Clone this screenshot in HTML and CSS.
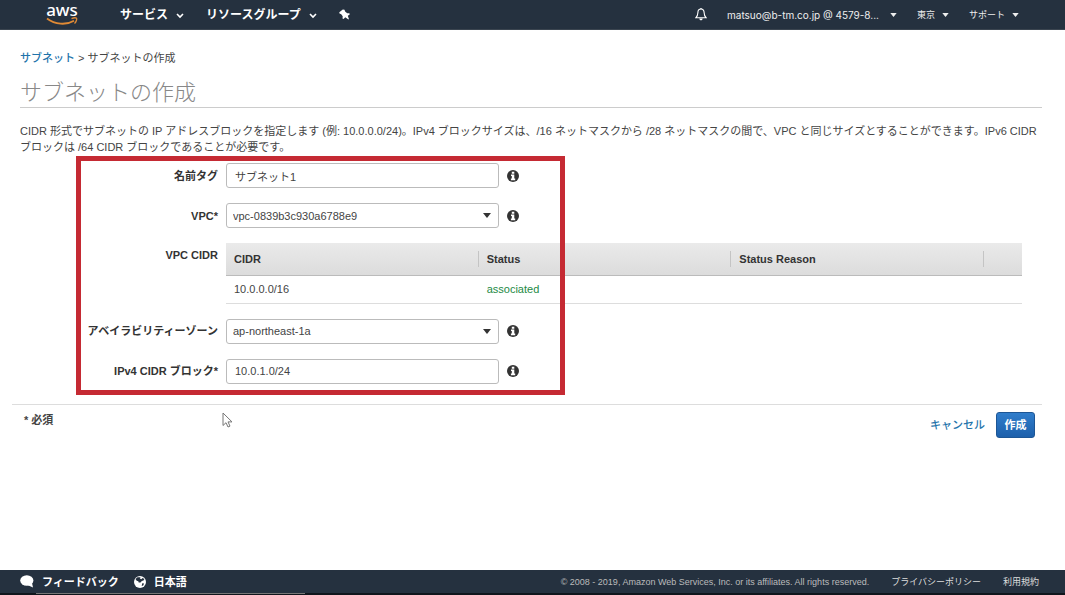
FILE: index.html
```html
<!DOCTYPE html>
<html lang="ja">
<head>
<meta charset="utf-8">
<meta name="viewport" content="width=device-width, initial-scale=1">
<title>サブネットの作成</title>
<link rel="stylesheet" href="styles.css">
</head>
<body>
<svg class="defs" aria-hidden="true">
  <symbol id="info" viewBox="0 0 12 12"><circle cx="6" cy="6" r="6" fill="#333"/><path d="M4.800 1.800h2.500v1.900H4.800zM4 4.500h3.300v4H8.200V10.200H3.900V8.600h.9V6.100H4z" fill="#fff"/></symbol>
  <symbol id="caret" viewBox="0 0 8 5"><path d="M0 0h8L4 5z" fill="currentColor"/></symbol>
  <symbol id="chevron" viewBox="0 0 8 6"><path d="M1 1l3 3 3-3" fill="none" stroke="currentColor" stroke-width="1.6"/></symbol>
</svg>

<header class="topbar">
  <a class="logo" href="#" aria-label="aws">
    <span class="logo-text">aws</span>
    <svg class="logo-smile" viewBox="0 0 32 9"><path d="M1 1.500c8 6 19 7 27 2.200" fill="none" stroke="#e08a35" stroke-width="1.800"/><path d="M25.500 1.700c2-.9 4.500-.9 5-.4s-.1 3.600-2 5.200" fill="none" stroke="#e08a35" stroke-width="1.300"/></svg>
  </a>
  <nav class="menus">
    <button class="menu" type="button">サービス<svg class="chevron"><use href="#chevron"/></svg></button>
    <button class="menu" type="button">リソースグループ<svg class="chevron"><use href="#chevron"/></svg></button>
    <button class="menu" type="button" aria-label="ピン留め"><svg class="pin" viewBox="0 0 11 11"><path d="M3.800.4L5.500.8l.6 1.800 2.100 1.600 2.200.1.300 1.100-1.900 1.300L9.900 10l-.5.500L6.300 8.300 4.500 9.900l-1-.4.2-2.300-1.500-2L.5 4.400.300 3.200z" fill="#fff"/></svg></button>
  </nav>
  <div class="account">
    <button class="icon-button" type="button" aria-label="通知"><svg class="bell" viewBox="0 0 12 13"><path d="M6 1C3.800 1 2.900 2.700 2.900 4.500c0 2.700-.8 4-2.100 5.300h10.400C9.900 8.500 9.100 7.200 9.100 4.500 9.100 2.700 8.200 1 6 1z" fill="none" stroke="#fff" stroke-width="1.100"/><path d="M4.300 10.500h3.400c0 2.400-3.400 2.400-3.400 0zM5.400 0h1.200v1.200H5.400z" fill="#fff"/></svg></button>
    <button class="account-item account-user" type="button">matsuo@b-tm.co.jp @ 4579-8...<svg class="small-caret"><use href="#caret"/></svg></button>
    <button class="account-item" type="button">東京<svg class="small-caret"><use href="#caret"/></svg></button>
    <button class="account-item" type="button">サポート<svg class="small-caret"><use href="#caret"/></svg></button>
  </div>
</header>

<main class="content">
  <nav class="breadcrumb"><a href="#">サブネット</a> &gt; サブネットの作成</nav>
  <h1 class="title">サブネットの作成</h1>
  <p class="intro">CIDR 形式でサブネットの IP アドレスブロックを指定します (例: 10.0.0.0/24)。IPv4 ブロックサイズは、/16 ネットマスクから /28 ネットマスクの間で、VPC と同じサイズとすることができます。IPv6 CIDR ブロックは /64 CIDR ブロックであることが必要です。</p>

  <form class="form">
    <div class="row">
      <label class="label" for="name">名前タグ</label>
      <input class="field" id="name" type="text" value="サブネット1">
      <svg class="info"><use href="#info"/></svg>
    </div>
    <div class="row">
      <label class="label" for="vpc">VPC*</label>
      <span class="select"><select class="field" id="vpc"><option>vpc-0839b3c930a6788e9</option></select><svg class="caret"><use href="#caret"/></svg></span>
      <svg class="info"><use href="#info"/></svg>
    </div>
    <div class="row row-table">
      <span class="label" id="cidr-label">VPC CIDR</span>
      <table class="table" aria-labelledby="cidr-label">
        <thead><tr><th><span>CIDR</span></th><th><span>Status</span></th><th><span>Status Reason</span></th><th class="rest"></th></tr></thead>
        <tbody><tr><td>10.0.0.0/16</td><td class="ok">associated</td><td></td><td></td></tr></tbody>
      </table>
    </div>
    <div class="row">
      <label class="label" for="zone">アベイラビリティーゾーン</label>
      <span class="select"><select class="field" id="zone"><option>ap-northeast-1a</option></select><svg class="caret"><use href="#caret"/></svg></span>
      <svg class="info"><use href="#info"/></svg>
    </div>
    <div class="row">
      <label class="label" for="block">IPv4 CIDR ブロック*</label>
      <input class="field" id="block" type="text" value="10.0.1.0/24">
      <svg class="info"><use href="#info"/></svg>
    </div>
    <div class="highlight"></div>
  </form>

  <div class="actions">
    <span class="required">* 必須</span>
    <a class="cancel" href="#">キャンセル</a>
    <button class="create" type="button">作成</button>
    <svg class="cursor" viewBox="0 0 11 16"><path d="M1 1v12.500l3-2.800 2 4.300 2-.9-2-4.200h4z" fill="#fff" stroke="#777"/></svg>
  </div>
</main>

<footer class="footer">
  <a class="footer-main" href="#"><svg class="bubble" viewBox="0 0 14 13"><ellipse cx="6.800" cy="5.500" rx="6.600" ry="5.200" fill="#fff"/><path d="M7.500 10l5.500 2.500-1-4.500z" fill="#fff"/></svg>フィードバック</a>
  <a class="footer-main" href="#"><svg class="globe" viewBox="0 0 12 12"><circle cx="6" cy="6" r="6" fill="#fff"/><path d="M1.500 3l2-1.700 2.500-.1.700.9-1 .5 1.500.6 1.400-1.300 1.800 1-.9 1.500-1.700.5-1.300 1.700-1.800-.2-.4-1.200-1.600-.4zM8.200 7.200l1.900.2-.9 2-1.500.6z" fill="#25313f"/></svg>日本語</a>
  <span class="copyright">© 2008 - 2019, Amazon Web Services, Inc. or its affiliates. All rights reserved.</span>
  <a class="footer-link" href="#">プライバシーポリシー</a>
  <a class="footer-link" href="#">利用規約</a>
</footer>
<div class="strip"><span class="strip-thumb"></span></div>
</body>
</html>
```

FILE: styles.css
```css
* { box-sizing: border-box; }

body {
  display: flex;
  flex-direction: column;
  min-height: 100vh;
  margin: 0;
  background: #fff;
  color: #444;
  font: 11px/16px "Liberation Sans", "Noto Sans CJK JP", sans-serif;
}

a { color: #1f74ab; text-decoration: none; }
button, input, select { margin: 0; font: inherit; }
svg { display: block; flex: none; }
.defs { position: absolute; width: 0; height: 0; }

.topbar {
  display: flex;
  align-items: center;
  height: 30px;
  padding: 0 46px;
  background: #25313f;
  border-bottom: 1px solid #3b4550;
  color: #fff;
}

.logo { width: 32px; color: #fff; }
.logo-text {
  display: block;
  font: 500 17px/14px "Noto Sans", sans-serif;
  text-align: center;
}
.logo-smile { width: 32px; height: 9px; }

.menus { display: flex; align-items: center; gap: 22px; margin-left: 42px; }
.menu, .account-item, .icon-button {
  display: flex;
  align-items: center;
  padding: 0;
  border: 0;
  background: none;
  color: #fff;
}
.menu { gap: 8px; font-size: 12px; font-weight: 700; }
.chevron { width: 8px; height: 6px; margin-top: 2px; }
.pin { width: 11px; height: 11px; }

.account { display: flex; align-items: center; gap: 20px; margin-left: auto; }
.account-item { gap: 7px; color: #eee; font: 9px/16px "Noto Sans CJK JP", sans-serif; }
.account-user { gap: 11px; font: 10px/16px Inter, sans-serif; }
.bell { width: 12px; height: 13px; }
.small-caret { width: 7px; height: 4px; }

.content { flex: 1; padding: 20px 23px 0 12px; }
.breadcrumb, .title, .intro { margin: 0 0 0 8px; }
.breadcrumb a { font-weight: 500; }
.title {
  margin-top: 13px;
  border-bottom: 1px solid #ccc;
  color: #888;
  font-size: 22px;
  font-weight: 300;
  line-height: 28px;
}
.intro { margin-top: 15px; }

.form { position: relative; display: grid; gap: 15px; padding: 8px 20px 20px 0; }
.row { display: grid; grid-template-columns: 206px 273px 12px; column-gap: 8px; align-items: center; }
.row-table { grid-template-columns: 206px 1fr; align-items: start; }
.row-table .label { padding-top: 4px; }
.label { color: #333; font-weight: 700; text-align: right; }
.field {
  width: 100%;
  height: 25px;
  padding: 0 8px;
  border: 1px solid #bbb;
  border-radius: 3px;
  background: #fff;
  color: #444;
}
.select { display: grid; align-items: center; }
.select > * { grid-area: 1 / 1; }
.select .field { padding: 0 6px; appearance: none; }
.caret { justify-self: end; width: 8px; height: 5px; margin-right: 8px; color: #333; pointer-events: none; }
.info { width: 12px; height: 12px; }

.table { width: 100%; border-collapse: collapse; table-layout: fixed; }
.table thead { background: linear-gradient(#eaeaea, #dcdcdc); }
.table th { height: 32px; padding: 0; border-bottom: 1px solid #bbb; color: #333; text-align: left; }
.table th span { display: block; padding-left: 8px; border-right: 1px solid #c4c4c4; }
.table .rest { width: 38px; }
.table td { height: 28px; padding: 0 8px; border-bottom: 1px solid #ddd; }
.table .ok { color: #238a45; }

.highlight {
  position: absolute;
  top: 1px;
  left: 64px;
  width: 489px;
  height: 239px;
  border: 5px solid #c52a33;
  pointer-events: none;
}

.actions {
  position: relative;
  display: flex;
  align-items: center;
  gap: 11px;
  padding: 7px 7px 0 12px;
  border-top: 1px solid #ddd;
}
.required { align-self: flex-start; margin-right: auto; font-weight: 700; }
.cancel { font-weight: 500; }
.create {
  width: 39px;
  height: 26px;
  padding: 0;
  border: 1px solid #1d5695;
  border-radius: 3px;
  background: linear-gradient(#307dcb, #1d60ab);
  color: #fff;
  font-weight: 700;
}
.cursor { position: absolute; top: 7px; left: 210px; width: 11px; height: 16px; }

.footer {
  display: flex;
  align-items: center;
  height: 23px;
  padding: 0 26px 0 20px;
  background: #25313f;
  color: #bbb;
}
.footer-main { display: flex; align-items: center; gap: 8px; margin-right: 15px; color: #fff; font-weight: 700; }
.bubble { width: 14px; height: 13px; }
.globe { width: 12px; height: 12px; }
.copyright { margin-left: auto; font-size: 9px; }
.footer-link { margin-left: 22px; color: #ddd; font-size: 9px; }

.strip { height: 2px; padding-left: 36px; background: #10161c; }
.strip-thumb { display: block; width: 269px; height: 1px; background: #777; }
```
